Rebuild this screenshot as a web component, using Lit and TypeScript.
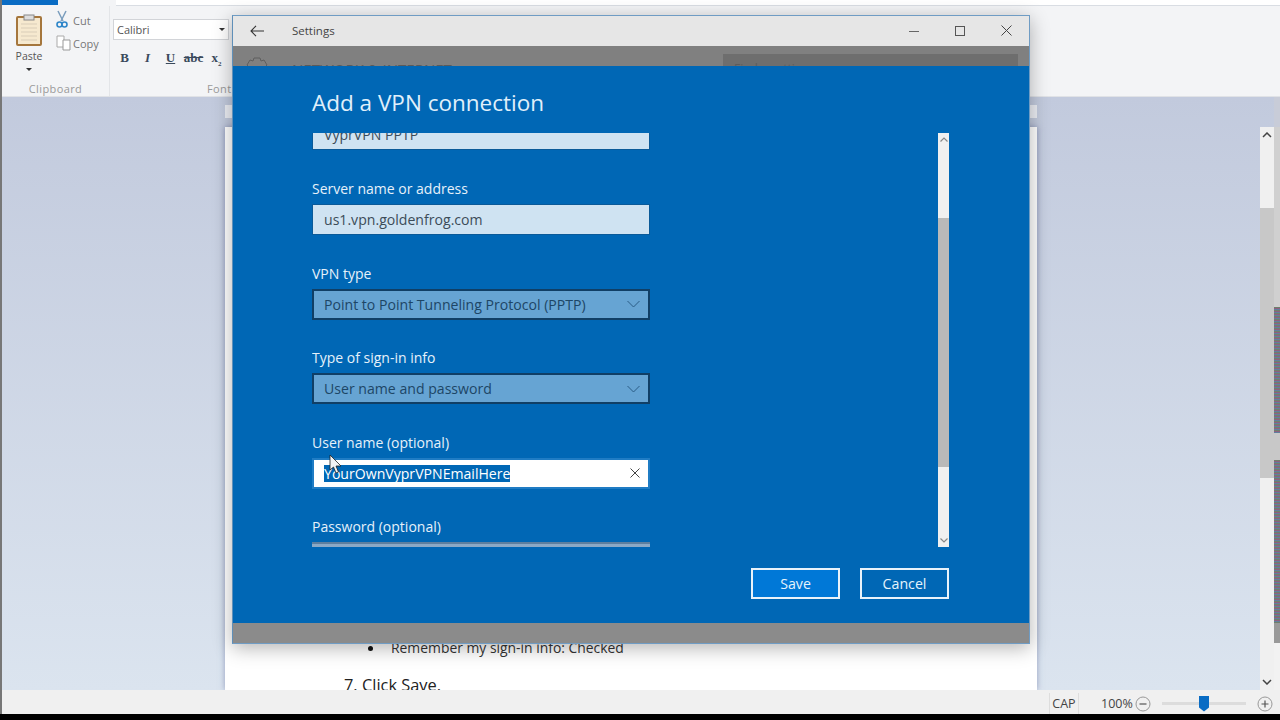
import { LitElement, html, css, svg } from 'lit';
import { customElement } from 'lit/decorators.js';

const chevron = svg`<path d="M.5 1l6 6 6-6" fill="none" stroke="#2a5c85" stroke-width="1"/>`;

@customElement('settings-window')
export class SettingsWindow extends LitElement {
  static styles = css`
    :host {
      position: absolute;
      left: 232px;
      top: 15px;
      width: 798px;
      height: 629px;
      display: flex;
      flex-direction: column;
      box-sizing: border-box;
      border: 1px solid #6f9cc4;
      border-left-color: #5f8fb8;
      box-shadow: 0 4px 18px rgba(0, 0, 0, 0.3);
      font-family: 'Open Sans', sans-serif;
      background: #808080;
    }
    .title {
      height: 30px;
      flex: none;
      display: flex;
      align-items: center;
      background: #e6e6e6;
      color: #444;
      font-size: 11.5px;
      padding-bottom: 1px;
      box-sizing: border-box;
    }
    .back {
      width: 14px;
      height: 12px;
      margin-left: 17px;
      margin-right: 28px;
    }
    .name {
      flex: 1;
    }
    .ctl {
      width: 46px;
      height: 29px;
      display: flex;
      align-items: center;
      justify-content: center;
    }
    .dim {
      height: 20px;
      flex: none;
      background: #808080;
      display: flex;
      overflow: hidden;
      color: #5a5a5a;
      padding-right: 11px;
      box-sizing: border-box;
    }
    .gear {
      width: 24px;
      height: 24px;
      margin: 11px 0 0 12px;
      flex: none;
    }
    .section {
      flex: 1;
      margin: 14px 0 0 23px;
      font-size: 15px;
      line-height: 18px;
      white-space: nowrap;
    }
    .search {
      width: 295px;
      margin-top: 8px;
      background: #6e6e6e;
      color: #5c5c5c;
      font-size: 12px;
      line-height: 18px;
      padding: 6px 0 0 11px;
      box-sizing: border-box;
      height: 30px;
    }
    .panel {
      height: 557px;
      flex: none;
      background: #0067b5;
      color: #e6f1fa;
      padding: 20px 79px 0 79px;
      box-sizing: border-box;
      display: flex;
      flex-direction: column;
    }
    h1 {
      margin: 0;
      font-weight: 400;
      font-size: 22.5px;
      line-height: 34px;
      height: 47px;
      color: #e0f0fb;
    }
    .form {
      display: flex;
      justify-content: space-between;
      height: 414px;
      flex: none;
    }
    .clip {
      width: 338px;
      overflow: hidden;
    }
    .fields {
      display: flex;
      flex-direction: column;
    }
    .field {
      height: 84.6px;
      flex: none;
    }
    .field.first {
      height: 60px;
      margin-top: -14px;
    }
    label {
      display: block;
      font-size: 14px;
      line-height: 20px;
      height: 25px;
    }
    .box {
      height: 31px;
      box-sizing: border-box;
      display: flex;
      align-items: center;
      justify-content: space-between;
      padding: 0 9px 0 11px;
      font-size: 14.1px;
      color: #3c4c58;
      background: #cfe3f2;
      border: 1px solid #0a5a99;
    }
    .select {
      background: #66a4d3;
      border: 2px solid #103f66;
      padding-left: 10px;
      padding-right: 8px;
      color: #1d4666;
    }
    .select svg {
      width: 13px;
      height: 8px;
    }
    .focus {
      background: #fff;
      border: 2px solid #1f7cc4;
      padding-left: 10px;
      padding-right: 8px;
      color: #fff;
    }
    .sel {
      background: #0067b5;
      line-height: 17px;
    }
    .clear {
      width: 10px;
      height: 10px;
    }
    .pass {
      height: 5px;
      background: #8aa9c6;
      border-top: 2px solid #5d7f9f;
      box-sizing: border-box;
    }
    .bar {
      width: 11px;
      height: 414px;
      margin-right: 1px;
      background: #f0f0f0;
      display: flex;
      flex-direction: column;
      flex: none;
    }
    .bar svg {
      width: 8px;
      height: 5px;
      margin: 4px auto;
      display: block;
      flex: none;
    }
    .track {
      height: 72px;
      flex: none;
    }
    .rest {
      flex: 1;
    }
    .thumb {
      height: 249px;
      background: #b9b9b9;
      flex: none;
    }
    .actions {
      display: flex;
      justify-content: flex-end;
      gap: 20px;
      margin-top: 21px;
      margin-right: 1px;
    }
    .btn {
      width: 89px;
      height: 31px;
      box-sizing: border-box;
      border: 2px solid #e8f2fa;
      background: #0078d7;
      color: #e6f3fc;
      font-size: 14.2px;
      display: flex;
      align-items: center;
      justify-content: center;
    }
    .btn.plain {
      background: #0067b5;
    }
    .foot {
      flex: 1;
      background: #8b8b8b;
    }
    .cursor {
      position: absolute;
      left: 96px;
      top: 438px;
      width: 14px;
      height: 20px;
    }
  `;

  render() {
    return html`
      <div class="title">
        <svg class="back" viewBox="0 0 14 12"><path d="M6 .8L1 6l5 5.2M1 6h13" fill="none" stroke="#333" stroke-width="1.1"/></svg>
        <span class="name">Settings</span>
        <div class="ctl"><svg width="10" height="10" viewBox="0 0 10 10"><path d="M0 5.500h10" stroke="#666" stroke-width="1"/></svg></div>
        <div class="ctl"><svg width="10" height="10" viewBox="0 0 10 10"><rect x=".5" y=".5" width="9" height="9" fill="none" stroke="#555"/></svg></div>
        <div class="ctl"><svg width="11" height="11" viewBox="0 0 11 11"><path d="M.5.5l10 10M10.500.5l-10 10" stroke="#444" stroke-width="1"/></svg></div>
      </div>
      <div class="dim">
        <svg class="gear" viewBox="0 0 24 24"><path d="M9 1h6l1 3 3-1 3 5-2 2v4l2 2-3 5-3-1-1 3H9l-1-3-3 1-3-5 2-2v-4L2 8l3-5 3 1z" fill="none" stroke="#5e5e5e"/></svg>
        <div class="section">NETWORK &amp; INTERNET</div>
        <div class="search">Find a setting</div>
      </div>
      <div class="panel">
        <h1>Add a VPN connection</h1>
        <div class="form">
          <div class="clip">
            <div class="fields">
              <div class="field first"><div class="box">VyprVPN PPTP</div></div>
              <div class="field"><label>Server name or address</label><div class="box">us1.vpn.goldenfrog.com</div></div>
              <div class="field"><label>VPN type</label><div class="box select">Point to Point Tunneling Protocol (PPTP)<svg viewBox="0 0 13 8">${chevron}</svg></div></div>
              <div class="field"><label>Type of sign-in info</label><div class="box select">User name and password<svg viewBox="0 0 13 8">${chevron}</svg></div></div>
              <div class="field"><label>User name (optional)</label><div class="box focus"><span class="sel">YourOwnVyprVPNEmailHere</span><svg class="clear" viewBox="0 0 10 10"><path d="M.5.5l9 9M9.500.5l-9 9" stroke="#444" stroke-width="1"/></svg></div></div>
              <div class="field"><label>Password (optional)</label><div class="pass"></div></div>
            </div>
          </div>
          <div class="bar">
            <svg viewBox="0 0 8 5"><path d="M.5 4.500L4 1l3.500 3.500" fill="none" stroke="#888" stroke-width="1.200"/></svg>
            <div class="track"></div>
            <div class="thumb"></div>
            <div class="rest"></div>
            <svg viewBox="0 0 8 5"><path d="M.5.500L4 4l3.500-3.500" fill="none" stroke="#888" stroke-width="1.200"/></svg>
          </div>
        </div>
        <div class="actions">
          <div class="btn">Save</div>
          <div class="btn plain">Cancel</div>
        </div>
      </div>
      <div class="foot"></div>
      <svg class="cursor" viewBox="0 0 14 20"><path d="M1 1v15l3.500-3 2.500 6 2.500-1-2.500-6h5z" fill="#f4f4f4" stroke="#222" stroke-width=".8"/></svg>
    `;
  }
}

@customElement('app-root')
export class AppRoot extends LitElement {
  static styles = css`
    :host {
      display: block;
      position: relative;
      width: 1280px;
      height: 720px;
      overflow: hidden;
      font-family: 'Open Sans', sans-serif;
      background: #000;
    }
    .app {
      height: 714px;
      display: flex;
      flex-direction: column;
      border-left: 2px solid #777;
      box-sizing: border-box;
    }
    .ribbon {
      height: 97px;
      flex: none;
      background: #f3f4f6;
      color: #555;
      border-bottom: 1px solid #e0e2e6;
      box-sizing: border-box;
    }
    .tabs {
      height: 6px;
      display: flex;
    }
    .file {
      width: 56px;
      height: 5px;
      background: #0a6cc4;
    }
    .gap {
      width: 58px;
    }
    .strip {
      flex: 1;
      background: #fff;
      border-bottom: 1px solid #d9dde3;
    }
    .groups {
      display: flex;
      height: 90px;
    }
    .group {
      display: flex;
      flex-direction: column;
      border-right: 1px solid #e3e5e8;
    }
    .clipboard {
      width: 107px;
    }
    .row {
      flex: 1;
      display: flex;
    }
    .paste {
      width: 54px;
      display: flex;
      flex-direction: column;
      align-items: center;
      font-size: 10.5px;
      padding-top: 8px;
      box-sizing: border-box;
    }
    .paste svg {
      width: 26px;
      height: 32px;
      margin-bottom: 3px;
    }
    .caret {
      width: 0;
      height: 0;
      border: 3px solid transparent;
      border-top: 3px solid #333;
      border-bottom: 0;
      margin-top: 5px;
    }
    .small {
      display: flex;
      flex-direction: column;
      gap: 7px;
      padding-top: 6px;
      font-size: 11px;
      color: #777;
    }
    .item {
      display: flex;
      align-items: center;
      gap: 1px;
      height: 16px;
    }
    .item svg {
      width: 16px;
      height: 16px;
      overflow: visible;
    }
    .glabel {
      text-align: center;
      font-size: 11px;
      letter-spacing: 0.4px;
      color: #9a9a9a;
      height: 15px;
      line-height: 15px;
    }
    .font {
      flex: 1;
      padding: 13px 0 0 3px;
    }
    .combo {
      width: 116px;
      height: 21px;
      box-sizing: border-box;
      background: #fff;
      border: 1px solid #d2d4d8;
      font-size: 11px;
      padding: 0 3px;
      color: #555;
      display: flex;
      align-items: center;
      justify-content: space-between;
    }
    .combo .caret {
      margin: 0;
    }
    .tools {
      display: flex;
      margin-top: 10px;
      font-family: 'Liberation Serif', serif;
      font-size: 13px;
      color: #3a4a5c;
      height: 16px;
      line-height: 16px;
    }
    .tools span {
      width: 23px;
      text-align: center;
      font-weight: 700;
    }
    .tools sub {
      font-size: 7px;
      line-height: 0;
    }
    .fontlabel {
      margin: 15px 0 0 94px;
      font-size: 11px;
      letter-spacing: 0.4px;
      color: #9a9a9a;
    }
    .doc {
      flex: 1;
      min-height: 0;
      display: flex;
      padding-left: 223px;
      background: linear-gradient(#c2cadd, #dbe4ef);
      box-sizing: border-box;
    }
    .sheet {
      width: 812px;
      flex: none;
      margin-right: 223px;
      display: flex;
      flex-direction: column;
      padding-top: 8px;
      box-sizing: border-box;
    }
    .ruler {
      height: 13px;
      flex: none;
      margin-bottom: 9px;
      background: #eceef4;
    }
    .page {
      flex: 1;
      min-height: 0;
      background: #fff;
      box-shadow: 0 0 6px rgba(90, 100, 150, 0.55);
      display: flex;
      flex-direction: column;
      align-items: flex-start;
      padding: 512px 0 0 143px;
      box-sizing: border-box;
      overflow: hidden;
      color: #333;
    }
    .line {
      font-size: 13.9px;
      line-height: 18px;
      display: flex;
      align-items: center;
      gap: 18px;
    }
    .dot {
      width: 5px;
      height: 5px;
      border-radius: 50%;
      background: #111;
    }
    .big {
      font-size: 16.4px;
      line-height: 22px;
      margin: 17px 0 0 -24px;
      color: #222;
    }
    .vbar {
      width: 14px;
      flex: none;
      margin-top: 30px;
      background: #f0f0f0;
      display: flex;
      flex-direction: column;
    }
    .vtrack {
      height: 81px;
      flex: none;
    }
    .vthumb {
      height: 270px;
      flex: none;
      background: #c8c8c8;
      margin-top: -16px;
    }
    .vrest {
      flex: 1;
    }
    .vchev {
      width: 10px;
      height: 6px;
      margin: 5px auto;
      display: block;
      flex: none;
    }
    .glitch {
      width: 6px;
      flex: none;
      display: flex;
      flex-direction: column;
    }
    .g1 {
      height: 30px;
      background: #c8ccd8;
    }
    .g2 {
      height: 180px;
      background: #d0d0d0;
    }
    .g3 {
      background: repeating-linear-gradient(#6f7f6a 0 1px, #8f5f7f 1px 2px, #5f7f9f 2px 3px);
    }
    .g3.a {
      height: 126px;
    }
    .g3.b {
      height: 163px;
    }
    .g4 {
      height: 27px;
      background: #c8c8c8;
    }
    .g5 {
      height: 20px;
      background: #999;
    }
    .g6 {
      flex: 1;
      background: #f2f2f2;
    }
    .status {
      height: 24px;
      flex: none;
      background: #f0f0f0;
      display: flex;
      align-items: center;
      justify-content: flex-end;
      color: #444;
      font-size: 12.5px;
      padding-top: 3px;
      box-sizing: border-box;
    }
    .cap {
      height: 21px;
      line-height: 21px;
      border-left: 1px solid #ddd;
      border-right: 1px solid #ddd;
      width: 30px;
      box-sizing: border-box;
      text-align: center;
      font-size: 12.5px;
    }
    .pct {
      margin-left: 22px;
      width: 28px;
    }
    .zoom {
      width: 16px;
      height: 16px;
      margin-left: 6px;
    }
    .zoom.plus {
      margin: 0 7px 0 0;
    }
    .slider {
      width: 84px;
      height: 3px;
      background: #dcdcdc;
      margin: 0 11px;
      display: flex;
      align-items: center;
      padding-left: 37px;
      box-sizing: border-box;
    }
    .knob {
      width: 10px;
      height: 16px;
      background: #0a6cc4;
      clip-path: polygon(0 0, 100% 0, 100% 75%, 50% 100%, 0 75%);
    }
  `;

  render() {
    return html`
      <div class="app">
        <div class="ribbon">
          <div class="tabs"><div class="file"></div><div class="gap"></div><div class="strip"></div></div>
          <div class="groups">
            <div class="group clipboard">
              <div class="row">
                <div class="paste">
                  <svg viewBox="0 0 26 32"><rect x="1" y="3" width="24" height="28" rx="1" fill="#f6e9cf" stroke="#a5763c" stroke-width="2"/><path d="M5 10h16M5 14h16M5 18h16M5 22h16M5 26h16" stroke="#d9cdb8"/><rect x="8" y="1" width="10" height="5" fill="#ddd" stroke="#888"/></svg>
                  Paste
                  <div class="caret"></div>
                </div>
                <div class="small">
                  <div class="item"><svg viewBox="0 0 16 16"><path d="M2 -1l5 10M10 -1L5 9" stroke="#7a9dbd" stroke-width="1.500" fill="none"/><circle cx="3.500" cy="12.500" r="2.500" fill="none" stroke="#2f86c9" stroke-width="1.600"/><circle cx="8.500" cy="12.500" r="2.500" fill="none" stroke="#2f86c9" stroke-width="1.600"/></svg>Cut</div>
                  <div class="item"><svg viewBox="0 0 16 16"><path d="M1 1h7v11H1z" fill="#fff" stroke="#aaa"/><path d="M7 5h7v10H7z" fill="#fff" stroke="#999"/></svg>Copy</div>
                </div>
              </div>
              <div class="glabel">Clipboard</div>
            </div>
            <div class="font">
              <div class="combo">Calibri<div class="caret"></div></div>
              <div class="tools"><span>B</span><span><i>I</i></span><span><u>U</u></span><span><s>abc</s></span><span>x<sub>2</sub></span></div>
              <div class="fontlabel">Font</div>
            </div>
          </div>
        </div>
        <div class="doc">
          <div class="sheet">
            <div class="ruler"></div>
            <div class="page">
              <div class="line"><span class="dot"></span><span>Remember my sign-in info: Checked</span></div>
              <div class="big">7. Click Save.</div>
            </div>
          </div>
          <div class="vbar">
            <svg class="vchev" viewBox="0 0 10 6"><path d="M1 5l4-4 4 4" fill="none" stroke="#444" stroke-width="1.500"/></svg>
            <div class="vtrack"></div>
            <div class="vthumb"></div>
            <div class="vrest"></div>
            <svg class="vchev" viewBox="0 0 10 6"><path d="M1 1l4 4 4-4" fill="none" stroke="#444" stroke-width="1.500"/></svg>
          </div>
          <div class="glitch">
            <div class="g1"></div><div class="g2"></div><div class="g3 a"></div><div class="g4"></div><div class="g3 b"></div><div class="g5"></div><div class="g6"></div>
          </div>
        </div>
        <div class="status">
          <div class="cap">CAP</div>
          <div class="pct">100%</div>
          <svg class="zoom" viewBox="0 0 16 16"><circle cx="8" cy="8" r="7" fill="none" stroke="#999"/><path d="M4.500 8h7" stroke="#555" stroke-width="1.200"/></svg>
          <div class="slider"><div class="knob"></div></div>
          <svg class="zoom plus" viewBox="0 0 16 16"><circle cx="8" cy="8" r="7" fill="none" stroke="#999"/><path d="M4.500 8h7M8 4.500v7" stroke="#555" stroke-width="1.200"/></svg>
        </div>
      </div>
      <settings-window></settings-window>
    `;
  }
}
